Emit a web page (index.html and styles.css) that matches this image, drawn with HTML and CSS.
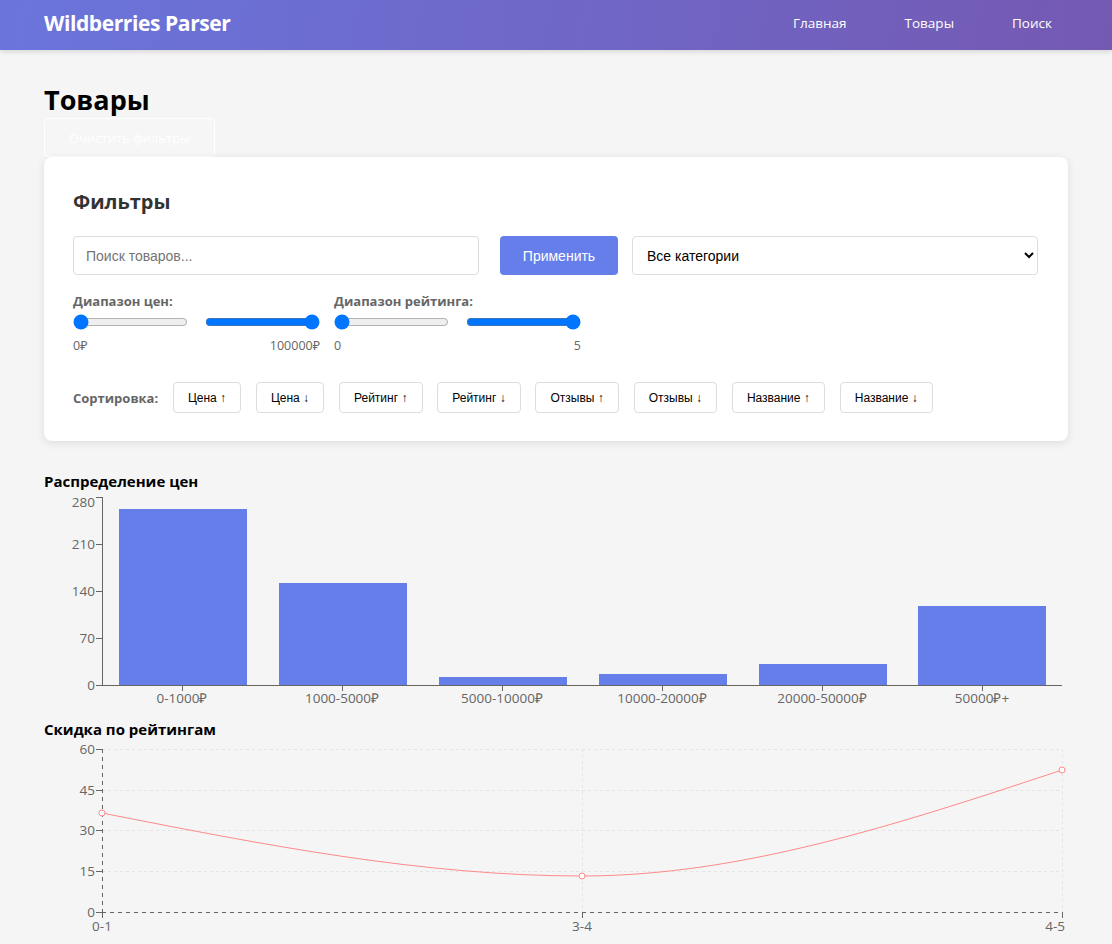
FILE: index.html
```html
<!DOCTYPE html>
<html lang="ru">
<head>
<meta charset="utf-8">
<title>Wildberries Parser</title>
<link rel="stylesheet" href="styles.css">
</head>
<body>
<header class="topbar">
  <div class="topbar-inner">
    <div class="logo">Wildberries Parser</div>
    <nav class="nav">
      <a href="#">Главная</a>
      <a href="#">Товары</a>
      <a href="#">Поиск</a>
    </nav>
  </div>
</header>
<main class="page">
  <h1 class="page-title">Товары</h1>
  <button class="clear-btn">Очистить фильтры</button>
  <section class="card">
    <h2 class="card-title">Фильтры</h2>
    <div class="search-row">
      <input class="search-input" type="text" placeholder="Поиск товаров...">
      <button class="apply-btn">Применить</button>
      <select class="category-select">
        <option>Все категории</option>
      </select>
    </div>
    <div class="ranges">
      <div class="range-group">
        <div class="range-label">Диапазон цен:</div>
        <div class="range-sliders">
          <input type="range" min="0" max="100000" value="0">
          <input type="range" min="0" max="100000" value="100000">
        </div>
        <div class="range-values"><span>0₽</span><span>100000₽</span></div>
      </div>
      <div class="range-group">
        <div class="range-label">Диапазон рейтинга:</div>
        <div class="range-sliders">
          <input type="range" min="0" max="5" value="0">
          <input type="range" min="0" max="5" value="5">
        </div>
        <div class="range-values"><span>0</span><span>5</span></div>
      </div>
    </div>
    <div class="sort-row">
      <span class="sort-label">Сортировка:</span>
      <button class="sort-btn">Цена ↑</button>
      <button class="sort-btn">Цена ↓</button>
      <button class="sort-btn">Рейтинг ↑</button>
      <button class="sort-btn">Рейтинг ↓</button>
      <button class="sort-btn">Отзывы ↑</button>
      <button class="sort-btn">Отзывы ↓</button>
      <button class="sort-btn">Название ↑</button>
      <button class="sort-btn">Название ↓</button>
    </div>
  </section>

  <section class="chart">
    <h3 class="chart-title">Распределение цен</h3>
    <svg class="chart-svg bar-svg" width="1024" height="222" viewBox="0 0 1024 222">
      <g class="bars" fill="#667eea">
        <rect x="75" y="17" width="128" height="176"/>
        <rect x="235" y="91" width="128" height="102"/>
        <rect x="395" y="185" width="128" height="8"/>
        <rect x="555" y="182" width="128" height="11"/>
        <rect x="715" y="172" width="128" height="21"/>
        <rect x="874" y="114" width="128" height="79"/>
      </g>
      <g stroke="#666" stroke-width="1" fill="none">
        <line x1="58.5" y1="5" x2="58.5" y2="193"/>
        <line x1="58" y1="193.5" x2="1018" y2="193.5"/>
        <line x1="52" y1="5.5" x2="58" y2="5.5"/>
        <line x1="52" y1="52.5" x2="58" y2="52.5"/>
        <line x1="52" y1="99.5" x2="58" y2="99.5"/>
        <line x1="52" y1="146.5" x2="58" y2="146.5"/>
        <line x1="52" y1="193.5" x2="58" y2="193.5"/>
        <line x1="138.5" y1="193" x2="138.5" y2="199"/>
        <line x1="298.5" y1="193" x2="298.5" y2="199"/>
        <line x1="458.5" y1="193" x2="458.5" y2="199"/>
        <line x1="618.5" y1="193" x2="618.5" y2="199"/>
        <line x1="778.5" y1="193" x2="778.5" y2="199"/>
        <line x1="938.5" y1="193" x2="938.5" y2="199"/>
      </g>
      <g class="tick-text" text-anchor="end">
        <text x="51" y="15">280</text>
        <text x="51" y="57">210</text>
        <text x="51" y="104">140</text>
        <text x="51" y="151">70</text>
        <text x="51" y="198">0</text>
      </g>
      <g class="tick-text" text-anchor="middle">
        <text x="138" y="211">0-1000₽</text>
        <text x="298" y="211">1000-5000₽</text>
        <text x="458" y="211">5000-10000₽</text>
        <text x="618" y="211">10000-20000₽</text>
        <text x="778" y="211">20000-50000₽</text>
        <text x="938" y="211">50000₽+</text>
      </g>
    </svg>
  </section>

  <section class="chart">
    <h3 class="chart-title">Скидка по рейтингам</h3>
    <svg class="chart-svg line-svg" width="1024" height="204" viewBox="0 0 1024 204">
      <g stroke="#e4e4e4" stroke-dasharray="3 3" fill="none">
        <line x1="58" y1="9.5" x2="1018" y2="9.5"/>
        <line x1="58" y1="50.5" x2="1018" y2="50.5"/>
        <line x1="58" y1="90.5" x2="1018" y2="90.5"/>
        <line x1="58" y1="131.5" x2="1018" y2="131.5"/>
        <line x1="538.5" y1="9" x2="538.5" y2="172"/>
        <line x1="1018.5" y1="9" x2="1018.5" y2="172"/>
      </g>
      <g stroke="#666" fill="none">
        <line x1="58.5" y1="9" x2="58.5" y2="172" stroke-dasharray="4 4"/>
        <line x1="58" y1="172.5" x2="1018" y2="172.5" stroke-dasharray="4 4"/>
        <line x1="52" y1="9.5" x2="58" y2="9.5"/>
        <line x1="52" y1="50.5" x2="58" y2="50.5"/>
        <line x1="52" y1="90.5" x2="58" y2="90.5"/>
        <line x1="52" y1="131.5" x2="58" y2="131.5"/>
        <line x1="52" y1="172.5" x2="58" y2="172.5"/>
        <line x1="58.5" y1="172" x2="58.5" y2="178"/>
        <line x1="538.5" y1="172" x2="538.5" y2="178"/>
        <line x1="1018.5" y1="172" x2="1018.5" y2="178"/>
      </g>
      <g class="tick-text" text-anchor="end">
        <text x="51" y="14">60</text>
        <text x="51" y="55">45</text>
        <text x="51" y="95">30</text>
        <text x="51" y="136">15</text>
        <text x="51" y="177">0</text>
      </g>
      <g class="tick-text">
        <text x="58" y="191" text-anchor="middle">0-1</text>
        <text x="538" y="191" text-anchor="middle">3-4</text>
        <text x="1021" y="191" text-anchor="end">4-5</text>
      </g>
      <path d="M58,73 C218,104.5 378,136 538,136 C698,136 858,83 1018,30" stroke="#ff8a8a" stroke-width="1" fill="none"/>
      <g stroke="#ff8a8a" fill="#fff">
        <circle cx="58" cy="73" r="3"/>
        <circle cx="538" cy="136" r="3"/>
        <circle cx="1018" cy="30" r="3"/>
      </g>
    </svg>
  </section>
</main>
</body>
</html>
```

FILE: styles.css
```css
* { box-sizing: border-box; }

html, body {
  margin: 0;
  padding: 0;
}

body {
  background: #f5f5f5;
  font-family: "Open Sans", "Noto Sans", sans-serif;
  color: #000;
  overflow: hidden;
}

.topbar {
  height: 50px;
  background: linear-gradient(100deg, #6a75dc 0%, #7459b2 100%);
  box-shadow: 0 2px 5px rgba(0, 0, 0, 0.12);
}

.topbar-inner {
  height: 50px;
  padding: 0 44px 4px;
  display: flex;
  align-items: center;
  justify-content: space-between;
}

.logo {
  color: #fff;
  font-weight: 700;
  font-size: 21px;
  letter-spacing: -0.4px;
}

.nav {
  display: flex;
  gap: 26px;
}

.nav a {
  color: #fff;
  text-decoration: none;
  font-size: 13.5px;
  padding: 8px 16px;
}

.page {
  padding: 32px 44px 0;
}

.page-title {
  margin: 0;
  font-size: 27px;
  line-height: 36px;
  font-weight: 700;
}

.clear-btn {
  display: block;
  width: 171px;
  height: 39px;
  background: #f6f6f6;
  border: 1px solid #fff;
  border-radius: 4px;
  color: #fff;
  font-family: "Open Sans", sans-serif;
  font-size: 13px;
}

.card {
  background: #fff;
  border-radius: 8px;
  box-shadow: 0 2px 8px rgba(0, 0, 0, 0.1);
  padding: 29px 29px 28px;
}

.card-title {
  margin: 0 0 18px;
  font-size: 20px;
  line-height: 32px;
  font-weight: 700;
  color: #333;
}

.search-row {
  display: flex;
  align-items: stretch;
  height: 39px;
}

.search-input {
  width: 406px;
  border: 1px solid #ddd;
  border-radius: 4px;
  padding: 0 12px;
  font-family: "Liberation Sans", Arial, sans-serif;
  font-size: 14px;
}

.search-input::placeholder { color: #757575; }

.apply-btn {
  margin-left: 21px;
  width: 118px;
  background: #667eea;
  color: #fff;
  border: none;
  border-radius: 4px;
  font-family: "Liberation Sans", Arial, sans-serif;
  font-size: 14px;
}

.category-select {
  margin-left: 14px;
  width: 406px;
  border: 1px solid #ddd;
  border-radius: 4px;
  padding: 0 10px;
  background: #fff;
  font-family: "Liberation Sans", Arial, sans-serif;
  font-size: 14px;
  color: #000;
}

.ranges {
  display: flex;
  gap: 14px;
  margin-top: 18px;
}

.range-group {
  width: 247px;
}

.range-label {
  font-size: 13px;
  font-weight: 700;
  color: #666;
  line-height: 16px;
}

.range-sliders {
  display: flex;
  justify-content: space-between;
  margin-top: 5px;
  height: 16px;
  align-items: center;
}

.range-sliders input {
  width: 115px;
  margin: 0;
}

.range-values {
  display: flex;
  justify-content: space-between;
  margin-top: 8px;
  font-size: 12.5px;
  line-height: 16px;
  color: #666;
}

.sort-row {
  display: flex;
  align-items: center;
  margin-top: 28px;
  gap: 14.5px;
}

.sort-label {
  font-size: 13px;
  font-weight: 700;
  color: #666;
}

.sort-btn {
  height: 31px;
  padding: 0 14.2px;
  background: #fff;
  border: 1px solid #ddd;
  border-radius: 4px;
  font-family: "Liberation Sans", Arial, sans-serif;
  font-size: 12px;
  color: #000;
}

.chart {
  margin-top: 29px;
}

.chart + .chart {
  margin-top: 4px;
}

.chart-title {
  margin: 0;
  font-size: 15px;
  line-height: 22px;
  font-weight: 700;
}

.chart-svg {
  display: block;
  overflow: visible;
}

.tick-text text {
  font-family: "Open Sans", sans-serif;
  font-size: 13.5px;
  fill: #666;
}
```
